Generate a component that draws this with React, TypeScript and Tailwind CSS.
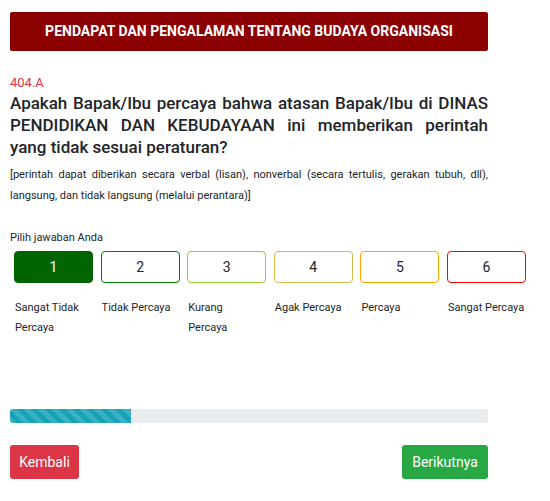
import React from "react";

const opts = [
  { n: "1", label: ["Sangat Tidak", "Percaya"], cls: "bg-[#006400] border-[#006400] text-white" },
  { n: "2", label: ["Tidak Percaya"], cls: "border-[#008000] text-[#212529]" },
  { n: "3", label: ["Kurang", "Percaya"], cls: "border-[#9acd32] text-[#212529]" },
  { n: "4", label: ["Agak Percaya"], cls: "border-[#d4b84a] text-[#212529]" },
  { n: "5", label: ["Percaya"], cls: "border-[#ffa500] text-[#212529]" },
  { n: "6", label: ["Sangat Percaya"], cls: "border-[#ff0000] text-[#212529]" },
];

export default function App() {
  return (
    <div className="w-[550px] h-[501px] bg-white font-['Roboto',sans-serif] text-[#212529]">
      <div className="pl-[10px] pt-[12px] w-[488px]">
        <div className="h-[39px] bg-[#8b0000] rounded-[2px] flex items-center justify-center text-white font-bold text-[14px]">
          PENDAPAT DAN PENGALAMAN TENTANG BUDAYA ORGANISASI
        </div>
        <div className="mt-[23px] text-[13px] leading-[18px] text-[#dc3545]">404.A</div>
        <div className="text-[17px] leading-[22px] font-medium text-justify">
          Apakah Bapak/Ibu percaya bahwa atasan Bapak/Ibu di DINAS PENDIDIKAN DAN KEBUDAYAAN ini memberikan perintah yang tidak sesuai peraturan?
        </div>
        <div className="mt-[6px] text-[11px] leading-[21px] text-justify">
          [perintah dapat diberikan secara verbal (lisan), nonverbal (secara tertulis, gerakan tubuh, dll), langsung, dan tidak langsung (melalui perantara)]
        </div>
        <div className="mt-[24px] text-[11px] leading-[16px]">Pilih jawaban Anda</div>
      </div>
      <div className="pl-[14px] mt-[5px] grid grid-cols-[repeat(6,79px)] gap-x-[7.6px]">
        {opts.map((o) => (
          <div key={o.n}>
            <div className={"h-[32px] rounded-[4px] border flex items-center justify-center text-[14px] " + o.cls}>
              {o.n}
            </div>
            <div className="mt-[15px] text-[11px] leading-[20px] pl-[1px] whitespace-nowrap">
              {o.label.map((l, i) => (
                <div key={i}>{l}</div>
              ))}
            </div>
          </div>
        ))}
      </div>
      <div className="pl-[10px] w-[488px]">
        <div className="mt-[71px] h-[14px] rounded-[3px] bg-[#e9ecef] overflow-hidden">
          <div
            className="h-full w-[121px] bg-[#17a2b8]"
            style={{
              backgroundImage:
                "linear-gradient(45deg, rgba(255,255,255,.15) 25%, transparent 25%, transparent 50%, rgba(255,255,255,.15) 50%, rgba(255,255,255,.15) 75%, transparent 75%, transparent)",
              backgroundSize: "14px 14px",
            }}
          />
        </div>
        <div className="mt-[22px] flex justify-between">
          <button className="h-[34px] w-[69px] rounded-[3px] bg-[#dc3545] text-white text-[14px]">Kembali</button>
          <button className="h-[34px] w-[86px] rounded-[3px] bg-[#28a745] text-white text-[14px]">Berikutnya</button>
        </div>
      </div>
    </div>
  );
}
